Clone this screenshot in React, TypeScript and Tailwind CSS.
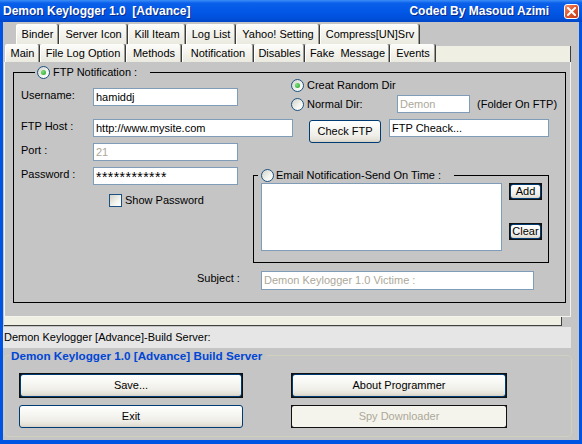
import React from "react";

const TXT = "font-['Liberation_Sans',Arial,sans-serif] text-[11px] text-black";
const GRAY = "bg-[#c5c5c5]";
const TAB =
  "h-full shrink-0 flex items-center justify-center whitespace-pre rounded-t-[2px] bg-[linear-gradient(180deg,#fdfdfb_0%,#f2f1ea_55%,#ebeae0_100%)] border-l border-l-white border-r border-r-[#3c3c3c] shadow-[inset_-1px_0_0_#9c9c94]";
const XPB =
  "w-full h-full rounded-[3px] border border-[#003c74] bg-[linear-gradient(180deg,#ffffff_0%,#f8f8f5_30%,#efeee8_70%,#e4e1d7_90%,#d6d0c5_100%)] flex items-center justify-center text-black whitespace-pre";

function Radio({ checked }: { checked?: boolean }) {
  return (
    <div className="w-[13px] h-[13px] shrink-0 rounded-full border border-[#1c5180] bg-[linear-gradient(135deg,#d2d2ca_0%,#f4f4f0_60%,#ffffff_100%)] flex items-center justify-center">
      {checked && (
        <div className="w-[5px] h-[5px] rounded-full bg-[radial-gradient(circle_at_35%_35%,#7fe07f,#21a121)]" />
      )}
    </div>
  );
}

function Field({
  cls,
  text,
  disabled,
  extra,
}: {
  cls: string;
  text?: string;
  disabled?: boolean;
  extra?: string;
}) {
  return (
    <div
      className={`${cls} shrink-0 bg-white border border-[#7f9db9] flex pl-[2px] overflow-hidden whitespace-nowrap ${
        disabled ? "text-[#aca899]" : "text-black"
      } ${extra ?? "items-center"}`}
    >
      {text}
    </div>
  );
}

function Label({ cls, text }: { cls: string; text: string }) {
  return <div className={`${cls} shrink-0 leading-[14px] whitespace-pre`}>{text}</div>;
}

function Framed({ cls, children }: { cls: string; children: React.ReactNode }) {
  return (
    <div className={`${cls} shrink-0 bg-[#111111] p-[1px]`}>
      <div className={XPB}>{children}</div>
    </div>
  );
}

export default function App() {
  return (
    <div className={`w-[582px] h-[444px] bg-[#0054e3] flex flex-col overflow-hidden ${TXT}`}>
      {/* Title bar */}
      <div className="h-[22px] shrink-0 flex items-center pl-[3px] pr-[3px] bg-[linear-gradient(180deg,#3d8ef7_0%,#0a60ea_14%,#0257e6_55%,#004fd9_85%,#0046c8_100%)] text-white font-bold text-[12px] [text-shadow:1px_1px_0_#0a2a8a]">
        <span className="whitespace-pre">Demon Keylogger 1.0  [Advance]</span>
        <span className="ml-auto whitespace-pre">Coded By Masoud Azimi</span>
        <div className="ml-[15px] w-[15px] h-[15px] rounded-[3px] border border-white bg-[linear-gradient(135deg,#f0916f_0%,#e2582f_45%,#c63c1b_100%)] flex items-center justify-center">
          <svg width="9" height="9" viewBox="0 0 9 9">
            <path d="M1 1 L8 8 M8 1 L1 8" stroke="white" strokeWidth="2" strokeLinecap="square" />
          </svg>
        </div>
      </div>

      {/* Body */}
      <div className={`flex-1 mx-[3px] mb-[4px] ${GRAY} flex flex-col`}>
        {/* Top tab row */}
        <div className="mt-[2px] h-[20px] flex ml-[13px] shrink-0">
          <div className={`${TAB} w-[43px]`}>Binder</div>
          <div className={`${TAB} w-[69px]`}>Server Icon</div>
          <div className={`${TAB} w-[58px]`}>Kill Iteam</div>
          <div className={`${TAB} w-[50px]`}>Log List</div>
          <div className={`${TAB} w-[84px]`}>Yahoo! Setting</div>
          <div className={`${TAB} w-[100px]`}>Compress[UN]Srv</div>
        </div>
        {/* Bottom tab row */}
        <div className="h-[18px] flex items-end ml-[2px] shrink-0 relative">
          <div className={`${TAB} w-[35px] h-[17px]`}>Main</div>
          <div className={`${TAB} w-[86px] h-[17px]`}>File Log Option</div>
          <div className={`${TAB} w-[56px] h-[17px]`}>Methods</div>
          <div className={`${TAB} w-[72px] h-[20px] relative z-10`}>Notification</div>
          <div className={`${TAB} w-[51px] h-[17px]`}>Disables</div>
          <div className={`${TAB} w-[85px] h-[17px]`}>Fake  Message</div>
          <div className={`${TAB} w-[46px] h-[17px]`}>Events</div>
          <div className="w-[135px] h-[16px] shrink-0 bg-[#efefe3] border-r border-r-[#3c3c3c]" />
        </div>

        {/* Panel */}
        <div className="ml-[1px] w-[567px] h-[255px] shrink-0 border-l border-r border-b border-[#f4f4ee] flex flex-col">
          {/* FTP frame */}
          <div className="ml-[8px] mt-[10px] w-[553px] h-[231px] shrink-0 border border-black flex flex-col">
            <div className={`-mt-[8px] ml-[21px] w-[115px] h-[14px] ${GRAY} flex items-center gap-[3px] pl-[2px] shrink-0`}>
              <Radio checked />
              <span className="whitespace-pre">FTP Notification :</span>
            </div>

            {/* Row 1 */}
            <div className="flex items-start shrink-0">
              <div className="w-[277px] flex items-start mt-[9px] shrink-0">
                <Label cls="ml-[7px] w-[72px]" text="Username:" />
                <Field cls="w-[145px] h-[18px]" text="hamiddj" />
              </div>
              <div className="flex flex-col">
                <div className="h-[13px] flex items-center gap-[3px]">
                  <Radio checked />
                  <span className="whitespace-pre">Creat Random Dir</span>
                </div>
                <div className="mt-[3px] h-[18px] flex items-center">
                  <Radio />
                  <span className="ml-[3px] w-[90px] whitespace-pre">Normal Dir:</span>
                  <Field cls="w-[73px] h-[18px]" text="Demon" disabled />
                  <span className="ml-[7px] whitespace-pre">(Folder On FTP)</span>
                </div>
              </div>
            </div>

            {/* Row 2 */}
            <div className="mt-[6px] flex items-start shrink-0">
              <Label cls="ml-[7px] w-[72px]" text="FTP Host :" />
              <Field cls="w-[200px] h-[18px]" text="http://www.mysite.com" />
              <div className="ml-[16px] mt-[1px] w-[72px] h-[23px] shrink-0">
                <div className={XPB}>Check FTP</div>
              </div>
              <Field cls="ml-[8px] w-[160px] h-[18px]" text="FTP Cheack..." />
            </div>

            {/* Row 3 */}
            <div className="flex items-start shrink-0">
              <Label cls="ml-[7px] w-[72px]" text="Port :" />
              <Field cls="w-[145px] h-[18px]" text="21" disabled />
            </div>

            {/* Row 4 */}
            <div className="flex items-start shrink-0">
              <div className="w-[239px] flex flex-col shrink-0">
                <div className="mt-[6px] flex items-start">
                  <Label cls="ml-[7px] w-[72px]" text="Password :" />
                  <Field
                    cls="w-[145px] h-[18px]"
                    text="************"
                    extra="items-start text-[14px] tracking-[0.45px] leading-[13px] pt-[3px]"
                  />
                </div>
                <div className="mt-[7px] ml-[95px] flex items-center gap-[3px]">
                  <div className="w-[13px] h-[13px] shrink-0 border border-[#1c5180] bg-[linear-gradient(135deg,#d2d2ca_0%,#f4f4f0_60%,#ffffff_100%)]" />
                  <span className="whitespace-pre">Show Password</span>
                </div>
              </div>
              <div className="mt-[14px] w-[296px] h-[88px] shrink-0 border border-black flex flex-col">
                <div className={`-mt-[8px] ml-[4px] w-[196px] h-[14px] ${GRAY} flex items-center gap-[2px] pl-[3px] shrink-0`}>
                  <Radio />
                  <span className="whitespace-pre">Email Notification-Send On Time :</span>
                </div>
                <div className="mt-[1px] flex items-start">
                  <div className="ml-[7px] w-[241px] h-[68px] shrink-0 bg-white border border-[#7f9db9]" />
                  <div className="ml-[7px] flex flex-col">
                    <Framed cls="w-[33px] h-[17px]">Add</Framed>
                    <Framed cls="mt-[23px] w-[33px] h-[17px]">Clear</Framed>
                  </div>
                </div>
              </div>
            </div>

            {/* Row 5 */}
            <div className="mt-[8px] flex items-start shrink-0">
              <Label cls="ml-[183px] w-[64px]" text="Subject :" />
              <Field cls="w-[273px] h-[19px]" text="Demon Keylogger 1.0 Victime :" disabled />
            </div>
          </div>
        </div>

        {/* Cream band */}
        <div className="ml-[1px] w-[558px] h-[9px] shrink-0 bg-[#efefe3] border-r border-b border-[#404040]" />

        {/* Status */}
        <div className="mt-[1px] w-[568px] h-[21px] shrink-0 bg-[#e6e6e6] flex items-center pl-[1px] whitespace-pre">
          Demon Keylogger [Advance]-Build Server:
        </div>

        {/* Group box */}
        <div className="mt-[7px] ml-[1px] w-[568px] h-[82px] shrink-0 border border-[#d0d0bf] rounded-[4px] flex flex-col">
          <div className={`-mt-[7px] ml-[5px] self-start pl-[1px] pr-[5px] h-[14px] ${GRAY} text-[#0046d5] font-bold text-[11.7px] leading-[14px] whitespace-pre`}>
            Demon Keylogger 1.0 [Advance] Build Server
          </div>
          <div className="mt-[10px] flex">
            <Framed cls="ml-[14px] w-[224px] h-[25px]">Save...</Framed>
            <Framed cls="ml-[48px] w-[216px] h-[25px]">About Programmer</Framed>
          </div>
          <div className="mt-[7px] flex">
            <div className="ml-[14px] w-[224px] h-[23px] shrink-0">
              <div className={XPB}>Exit</div>
            </div>
            <div className="ml-[48px] w-[216px] h-[23px] shrink-0 bg-[#111111] p-[1px]">
              <div className="w-full h-full rounded-[2px] bg-[#f5f4ec] flex items-center justify-center text-[#aca899]">
                Spy Downloader
              </div>
            </div>
          </div>
        </div>
      </div>
    </div>
  );
}
